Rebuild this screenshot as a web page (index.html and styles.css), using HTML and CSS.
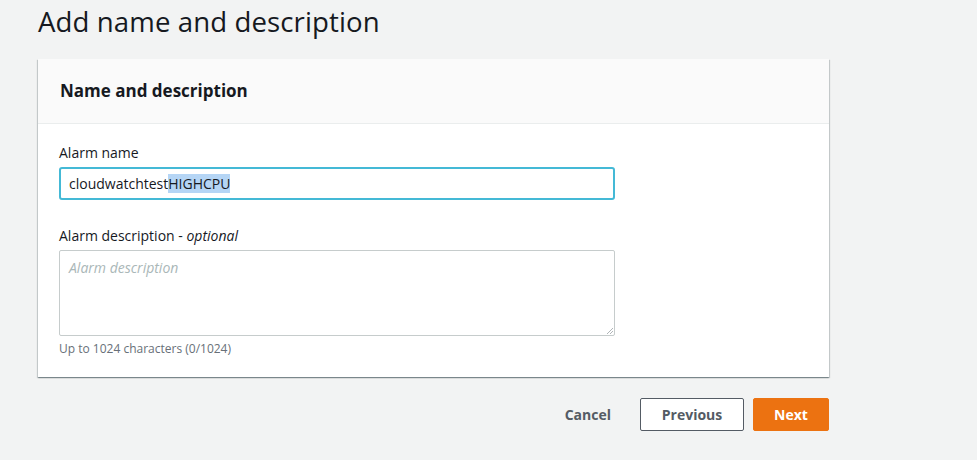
FILE: index.html
```html
<!DOCTYPE html>
<html>
<head>
<meta charset="utf-8">
<link rel="stylesheet" href="styles.css">
</head>
<body>
<div class="page">
  <h1 class="title">Add name and description</h1>
  <div class="card">
    <div class="card-header">Name and description</div>
    <div class="card-body">
      <div class="field">
        <label class="label">Alarm name</label>
        <div class="input focused">cloudwatchtest<span class="sel">HIGHCPU</span></div>
      </div>
      <div class="field second">
        <label class="label">Alarm description - <i>optional</i></label>
        <div class="textarea">
          <span class="placeholder">Alarm description</span>
          <svg class="grip" width="7" height="7" viewBox="0 0 7 7"><path d="M7 1 L1 7 M7 4 L4 7" stroke="#b0b5b8" stroke-width="1"/></svg>
        </div>
        <div class="hint">Up to 1024 characters (0/1024)</div>
      </div>
    </div>
  </div>
  <div class="actions">
    <button class="btn link">Cancel</button>
    <button class="btn normal">Previous</button>
    <button class="btn primary">Next</button>
  </div>
</div>
</body>
</html>
```
FILE: styles.css
```css
html, body {
  margin: 0;
  padding: 0;
  background: #f2f3f3;
  font-family: "Open Sans", "Noto Sans", Arial, sans-serif;
  color: #16191f;
}
.page {
  width: 791px;
  padding-left: 38px;
}
.title {
  margin: 0;
  padding-top: 2px;
  height: 57px;
  font-size: 27.6px;
  font-weight: 400;
  line-height: 38px;
  color: #16191f;
  letter-spacing: 0.1px;
}
.card {
  background: #fff;
  box-shadow: 0 1px 1px 0 rgba(0,28,36,0.3), 1px 1px 1px 0 rgba(0,28,36,0.15), -1px 1px 1px 0 rgba(0,28,36,0.15);
}
.card-header {
  height: 64px;
  background: #fafafa;
  border-bottom: 1px solid #eaeded;
  padding-left: 22px;
  font-size: 17px;
  font-weight: 700;
  line-height: 64px;
}
.card-body {
  padding: 18px 21px 20px 21px;
}
.label {
  display: block;
  font-size: 14px;
  line-height: 22px;
  margin-bottom: 3px;
}
.input {
  width: 544px;
  height: 29px;
  border: 2px solid #44b9d6;
  border-radius: 3px;
  font-size: 14px;
  line-height: 29px;
  padding-left: 8px;
  box-sizing: content-box;
}
.sel {
  background: #b5d5f5;
}
.second {
  margin-top: 25px;
}
.textarea {
  position: relative;
  width: 554px;
  height: 84px;
  border: 1px solid #c6cccc;
  border-radius: 2px;
}
.placeholder {
  display: block;
  padding: 6px 0 0 9px;
  font-size: 14px;
  font-style: italic;
  color: #aab7b8;
  line-height: 22px;
}
.grip {
  position: absolute;
  right: 1px;
  bottom: 1px;
}
.hint {
  margin-top: 5px;
  font-size: 12px;
  line-height: 16px;
  color: #687078;
}
.actions {
  display: flex;
  justify-content: flex-end;
  align-items: center;
  margin-top: 21px;
  gap: 9px;
}
.btn {
  font-family: inherit;
  font-size: 14px;
  font-weight: 700;
  height: 33px;
  padding: 0 20px;
  border-radius: 2px;
  cursor: pointer;
}
.link {
  background: none;
  border: none;
  color: #545b64;
  margin-right: 0;
}
.normal {
  background: #fff;
  border: 1px solid #545b64;
  color: #545b64;
  width: 104px;
}
.primary {
  background: #ec7211;
  border: 1px solid #ec7211;
  color: #fff;
  width: 76px;
}
```
